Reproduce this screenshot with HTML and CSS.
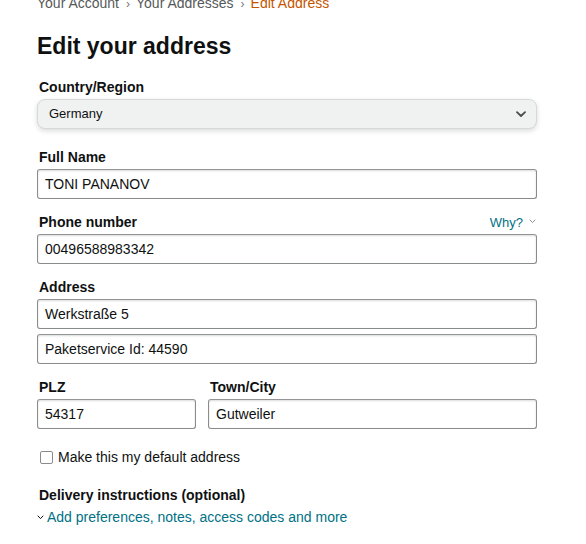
FILE: index.html
```html
<!DOCTYPE html>
<html lang="en">
<head>
<meta charset="utf-8">
<title>Edit your address</title>
<link rel="stylesheet" href="styles.css">
</head>
<body>
<div class="page">
  <nav class="crumbs">
    <a href="#" class="crumb">Your Account</a><span class="sep">›</span><a href="#" class="crumb">Your Addresses</a><span class="sep">›</span><span class="crumb current">Edit Address</span>
  </nav>
  <h1 class="title">Edit your address</h1>
  <form class="form">
    <div class="group group-select">
      <label class="label">Country/Region</label>
      <div class="select">
        <span>Germany</span>
        <svg class="select-caret" width="10" height="7" viewBox="0 0 10 7"><path d="M1 1.2 L5 5 L9 1.2" fill="none" stroke="#484c4c" stroke-width="1.8" stroke-linecap="round" stroke-linejoin="round"/></svg>
      </div>
    </div>
    <div class="group">
      <label class="label">Full Name</label>
      <div class="input">TONI PANANOV</div>
    </div>
    <div class="group">
      <div class="label-row">
        <label class="label">Phone number</label>
        <a href="#" class="why">Why?<svg class="why-caret" width="7" height="5" viewBox="0 0 7 5"><path d="M1 1 L3.5 3.6 L6 1" fill="none" stroke="#8d9096" stroke-width="1" stroke-linecap="round"/></svg></a>
      </div>
      <div class="input">00496588983342</div>
    </div>
    <div class="group">
      <label class="label">Address</label>
      <div class="input">Werkstraße 5</div>
      <div class="input input-next">Paketservice Id: 44590</div>
    </div>
    <div class="group group-split">
      <div class="split">
        <div>
          <label class="label">PLZ</label>
          <div class="input">54317</div>
        </div>
        <div>
          <label class="label">Town/City</label>
          <div class="input">Gutweiler</div>
        </div>
      </div>
    </div>
    <div class="check-row">
      <span class="checkbox"></span>
      <span class="check-text">Make this my default address</span>
    </div>
    <div class="delivery">
      <div class="label">Delivery instructions (optional)</div>
      <a href="#" class="expander"><svg class="exp-caret" width="7" height="5" viewBox="0 0 7 5"><path d="M1 1 L3.5 3.6 L6 1" fill="none" stroke="#0f1111" stroke-width="1" stroke-linecap="round"/></svg>Add preferences, notes, access codes and more</a>
    </div>
  </form>
</div>
</body>
</html>
```
FILE: styles.css
```css
* { box-sizing: border-box; }
html, body { margin: 0; padding: 0; background: #ffffff; }
body {
  font-family: "Liberation Sans", Arial, sans-serif;
  color: #0f1111;
  font-size: 14px;
  line-height: 20px;
}
.page {
  width: 574px;
  padding: 0 37px;
}
.crumbs {
  margin-top: -7px;
  height: 20px;
  font-size: 14px;
  line-height: 20px;
  color: #565959;
  white-space: nowrap;
}
.crumb { color: #565959; text-decoration: none; }
.crumb.current { color: #c45500; }
.sep {
  display: inline-block;
  margin: 0 6px 0 7px;
  font-size: 12px;
  color: #767676;
}
.title {
  margin: 17px 0 16px;
  font-size: 23px;
  line-height: 32px;
  font-weight: 700;
  color: #0f1111;
}
.form { width: 500px; }
.group { margin-bottom: 14px; }
.group-select { margin-bottom: 19px; }
.group-split { margin-bottom: 18px; }
.label {
  display: block;
  font-size: 14px;
  line-height: 19px;
  font-weight: 700;
  color: #0f1111;
  margin: 0 0 2px 2px;
}
.label-row {
  display: flex;
  justify-content: space-between;
  align-items: flex-start;
}
.why {
  display: flex;
  align-items: center;
  gap: 6px;
  font-size: 13px;
  line-height: 19px;
  color: #007185;
  text-decoration: none;
  margin-right: 1px;
}
.why-caret { margin-top: -2px; }
.select {
  height: 30px;
  display: flex;
  align-items: center;
  justify-content: space-between;
  padding: 0 10px 0 11px;
  background: #f0f2f2;
  border: 1px solid #d5d9d9;
  border-radius: 8px;
  box-shadow: 0 2px 5px rgba(15, 17, 17, 0.15);
  font-size: 13px;
  color: #0f1111;
}
.input {
  height: 30px;
  display: flex;
  align-items: center;
  padding: 0 7px;
  border: 1px solid #888c8c;
  border-top-color: #949494;
  border-radius: 3px;
  box-shadow: 0 1px 2px rgba(15, 17, 17, 0.15) inset;
  font-size: 14px;
  color: #0f1111;
  background: #fff;
}
.input-next { margin-top: 5px; }
.split {
  display: grid;
  grid-template-columns: 159px 1fr;
  column-gap: 12px;
}
.check-row {
  display: flex;
  align-items: center;
  height: 20px;
  padding-left: 3px;
  margin-bottom: 19px;
}
.checkbox {
  width: 13px;
  height: 13px;
  border: 1px solid #888c8c;
  border-radius: 2px;
  background: #fff;
  margin-right: 5px;
}
.check-text { font-size: 14px; }
.delivery .label { margin-bottom: 2px; }
.expander {
  display: flex;
  align-items: center;
  gap: 3px;
  font-size: 14px;
  line-height: 20px;
  color: #007185;
  text-decoration: none;
}
.exp-caret { margin-top: 1px; }
```
